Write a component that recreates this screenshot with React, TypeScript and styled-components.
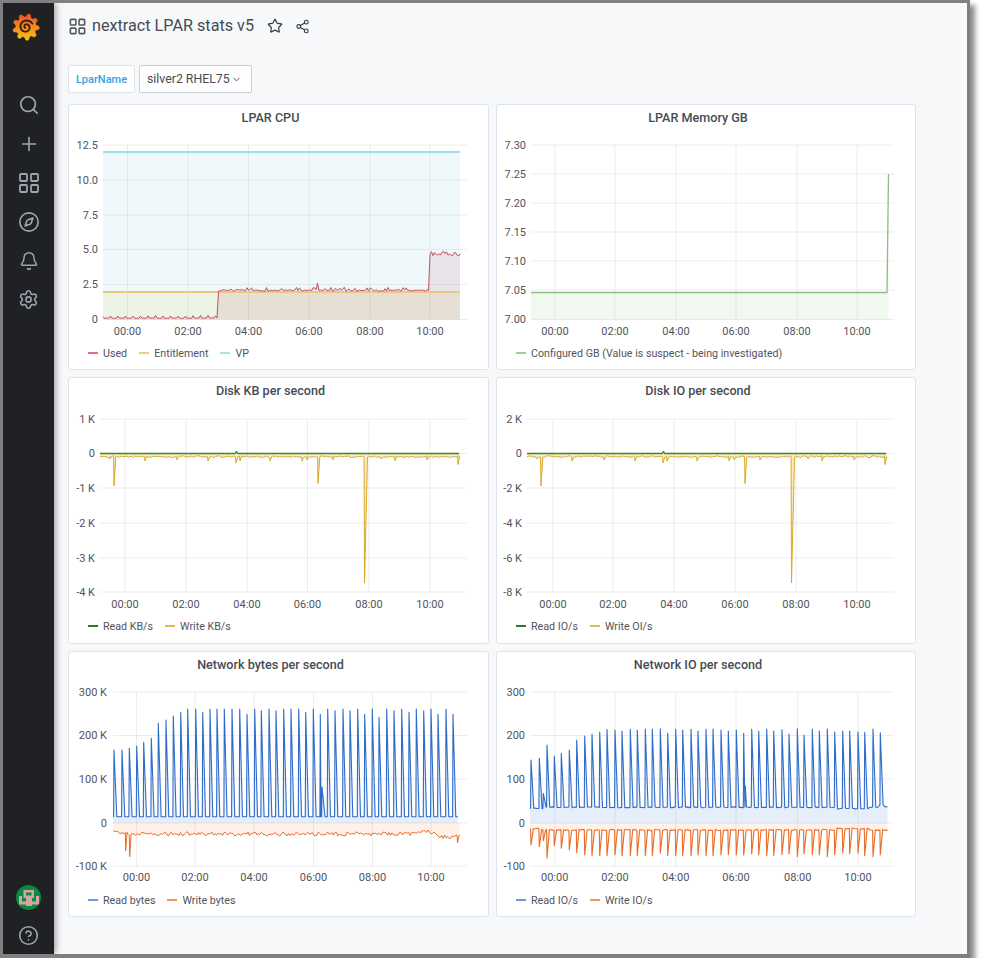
import React from 'react';
import styled, { createGlobalStyle } from 'styled-components';
import { Search, Plus, LayoutGrid, Compass, Bell, Settings, CircleHelp, Star, Share2, ChevronDown } from 'lucide-react';

const Global = createGlobalStyle`
  html, body { margin: 0; padding: 0; background: #fff; }
  body { font-family: Roboto, "Liberation Sans", sans-serif; color: #464c54; }
`;

const Frame = styled.div`
  box-sizing: border-box;
  width: 970px;
  height: 958px;
  border: solid #808080;
  border-width: 3px 3px 4px 3px;
  box-shadow: 5px 5px 5px rgba(0, 0, 0, 0.45);
  display: flex;
  background: #f7f8fa;
  overflow: hidden;
`;
const Sidebar = styled.nav`
  width: 51px;
  flex: none;
  background: #1f2125;
  box-shadow: 2px 0 6px rgba(0, 0, 0, 0.35);
  display: flex;
  flex-direction: column;
  align-items: center;
  z-index: 1;
`;
const LogoSlot = styled.div`
  box-sizing: border-box;
  height: 48px;
  width: 100%;
  padding-right: 6px;
  display: flex;
  align-items: center;
  justify-content: center;
  margin-bottom: 34px;
`;
const NavItem = styled.div<{ $h?: number }>`
  height: ${p => p.$h ?? 39}px;
  width: 100%;
  flex: none;
  display: flex;
  align-items: center;
  justify-content: center;
  color: #9da5b0;
`;
const Spacer = styled.div`
  flex: 1;
`;
const Main = styled.main`
  flex: 1;
  padding-left: 14px;
`;
const Header = styled.header`
  height: 46px;
  display: flex;
  align-items: center;
  color: #464c54;
`;
const Title = styled.h1`
  margin: 0 13px 0 5px;
  font-size: 16.2px;
  font-weight: 400;
  line-height: 1;
  color: #464c54;
  white-space: nowrap;
`;
const HeaderBtn = styled.span`
  display: inline-flex;
  margin-right: 12px;
  color: #363b42;
`;
const Vars = styled.div`
  margin-top: 16px;
  margin-bottom: 11px;
  display: flex;
  gap: 4px;
  height: 28px;
`;
const VarLabel = styled.div`
  box-sizing: border-box;
  width: 67px;
  background: #fff;
  border: 1px solid #dde4ed;
  border-radius: 2px;
  color: #33a2e5;
  font-size: 11px;
  font-weight: 500;
  display: flex;
  align-items: center;
  justify-content: center;
`;
const VarSelect = styled.div`
  box-sizing: border-box;
  width: 113px;
  background: #fff;
  border: 1px solid #c7d0d9;
  border-radius: 2px;
  color: #464c54;
  font-size: 12.3px;
  white-space: nowrap;
  display: flex;
  align-items: center;
  padding-left: 7px;
  gap: 1px;
`;
const Grid = styled.div`
  display: grid;
  grid-template-columns: 421px 420px;
  grid-template-rows: 266px 267px 266px;
  gap: 7px;
`;
const Panel = styled.section`
  box-sizing: border-box;
  background: #fff;
  border: 1px solid #dde4ed;
  border-radius: 3px;
  display: flex;
  flex-direction: column;
`;
const PanelTitle = styled.h2`
  margin: 0;
  height: 25px;
  padding-right: 16px;
  font-size: 12.6px;
  font-weight: 500;
  line-height: 25px;
  text-align: center;
  color: #464c54;
  flex: none;
`;
const ChartSvg = styled.svg`
  display: block;
  flex: none;
  width: 419px;
  height: 213px;
`;
const Legend = styled.div`
  height: 20px;
  padding-left: 19px;
  display: flex;
  align-items: center;
  gap: 12px;
  font-size: 10.7px;
  color: #52545c;
`;
const LegendItem = styled.div`
  display: flex;
  align-items: center;
  gap: 5px;
`;
const Swatch = styled.i<{ $c: string }>`
  display: block;
  width: 10px;
  height: 2px;
  background: ${p => p.$c};
`;
const GridLine = styled.line`
  stroke: rgba(0, 0, 0, 0.07);
  stroke-width: 1;
`;
const AxisText = styled.text`
  font-family: Roboto, "Liberation Sans", sans-serif;
  font-size: 11px;
  fill: #52545c;
`;

type Pt = [number, number];
type Spike = [number, number, number?];
function rng(seed: number) {
  let a = seed;
  return () => {
    a |= 0; a = (a + 0x6d2b79f5) | 0;
    let t = Math.imul(a ^ (a >>> 15), 1 | a);
    t = (t + Math.imul(t ^ (t >>> 7), 61 | t)) ^ t;
    return ((t ^ (t >>> 14)) >>> 0) / 4294967296;
  };
}
function spiked(x0: number, x1: number, base: (x: number) => number, spikes: Spike[], defW = 2.8, step = 2.5): Pt[] {
  const pts: Pt[] = [];
  for (let x = x0; x <= x1; x += step) {
    const blocked = spikes.some(([sx, , w]) => x > sx - 0.8 && x < sx + (w ?? defW) + 0.4);
    if (!blocked) pts.push([x, base(x)]);
  }
  spikes.forEach(([sx, sy, w]) => {
    pts.push([sx - 0.4, base(sx)]);
    pts.push([sx, sy]);
    pts.push([sx + (w ?? defW), base(sx + (w ?? defW))]);
  });
  return pts.sort((a, b) => a[0] - b[0]);
}
const toPath = (p: Pt[]) => 'M' + p.map(([x, y]) => `${x.toFixed(1)},${y.toFixed(1)}`).join('L');
const toArea = (p: Pt[], y0: number) => `${toPath(p)}L${p[p.length - 1][0]},${y0}L${p[0][0]},${y0}Z`;

type Series = { pts: Pt[]; color: string; fill?: string; zero?: number; width?: number };

interface ChartProps {
  left: number; top: number;
  gridL: number; gridR: number; labelR: number;
  xOffset?: number;
  yTicks: [string, number][];
  xTicks: [string, number][];
  series: Series[];
}
function Chart({ left, top, gridL, gridR, labelR, xOffset = 15, yTicks, xTicks, series }: ChartProps) {
  const yTop = yTicks[0][1];
  const yBot = yTicks[yTicks.length - 1][1];
  return (
    <ChartSvg viewBox={`${left} ${top} 419 213`}>
      {yTicks.map(([l, y]) => <GridLine key={l} x1={gridL} x2={gridR} y1={y} y2={y} />)}
      {xTicks.map(([l, x]) => <GridLine key={l} x1={x} x2={x} y1={yTop} y2={yBot} />)}
      {series.map((s, i) => s.fill ? <path key={'a' + i} d={toArea(s.pts, s.zero!)} fill={s.fill} /> : null)}
      {series.map((s, i) => <path key={'l' + i} d={toPath(s.pts)} fill="none" stroke={s.color} strokeWidth={s.width ?? 1} strokeLinejoin="round" />)}
      {yTicks.map(([l, y]) => <AxisText key={l} x={labelR} y={y + 3.5} textAnchor="end">{l}</AxisText>)}
      {xTicks.map(([l, x]) => <AxisText key={l} x={x} y={yBot + xOffset} textAnchor="middle">{l}</AxisText>)}
    </ChartSvg>
  );
}

const times = ['00:00', '02:00', '04:00', '06:00', '08:00', '10:00'];
const xt = (xs: number[]) => xs.map((x, i) => [times[i], x] as [string, number]);

// LPAR CPU
const cpuY = (v: number) => 319.5 - v * 13.96;
const cpuUsed = (() => {
  const r = rng(7);
  const pts: Pt[] = [];
  for (let x = 103; x <= 460; x += 1.5) {
    let v: number;
    if (x < 217.5) v = 0.08 + (Math.round((x - 103) / 1.5) % 5 === 0 ? 0.14 + r() * 0.08 : r() * 0.03);
    else if (x < 429.5) v = 2.02 + r() * 0.12 + (r() > 0.82 ? 0.16 : 0);
    else v = 4.55 + r() * 0.32;
    if (Math.abs(x - 318) < 0.8) v = 2.6;
    pts.push([x, cpuY(v)]);
  }
  return pts;
})();
const flat = (x0: number, x1: number, y: number): Pt[] => [[x0, y], [x1, y]];

// Disk
const diskBaseSpikes: Spike[] = [
  [114, 486, 1.8], [318, 483.5, 1.8], [364.5, 583, 3],
  [110, 459], [145, 461], [177, 460], [208, 461], [236, 463], [240, 461], [270, 461], [302, 461], [307, 460], [333, 460], [381, 459], [395, 461], [427, 460], [458, 464.5],
];
const diskWrite = (dx: number, seed: number): Pt[] => {
  const r = rng(seed);
  return spiked(100 + dx, 460 + dx, () => 456.7 + (r() - 0.5) * 1.8, diskBaseSpikes.map(([x, y, w]) => [x + dx, y, w] as Spike), 1.8, 1.5);
};
const diskRead = (x0: number, x1: number, bump: number): Pt[] => [[x0, 453.5], [bump - 1.2, 453.5], [bump, 451.5], [bump + 1.2, 453.5], [x1, 453.5]];

// Network bytes
const nbX = [162,186,208,230,251,274,295,318,340,362,383,407,428,450,471,493,516,539,561,584,604,627,648,671,693,716,737,760,781,803,825,849,870,893,914,937,957,980,1002,1025,1047,1069,1091,1113,1134,1158,1179];
const nbZ = [210,210,205,198,187,175,130,120,108,97,87,87,97,87,87,87,87,87,103,87,92,87,92,87,87,87,97,87,103,87,92,87,92,87,103,87,112,87,92,87,97,87,92,87,103,87,103];
const nbRead = spiked(113, 460, () => 816.7, [
  ...nbX.map((z, i) => [60 + z / 3, 680 + nbZ[i] / 3, 2.8] as Spike).filter(s => Math.abs(s[0] - 320.3) > 0.5),
  [320.3, 714.3, 0.7], [322, 786.7, 3],
]);
const nbWrite = (() => {
  const r = rng(11);
  return spiked(113, 460, x => {
    let b = 834;
    if (x < 120) b = 831;
    else if (x > 410 && x < 437) b = 832;
    else if (x >= 437) b = 836.5;
    return b + (r() - 0.5) * 4;
  }, [[125.7, 850.7, 1.4], [129.7, 856.7, 1.4], [457.5, 843, 1.5]], 1.4, 1.5);
})();

// Network IO
const niX = [123,148,160,171,193,214,238,260,284,306,329,351,375,396,421,442,466,487,511,533,557,578,603,624,648,669,693,715,739,761,785,806,830,851,876,897,922,942,967,988,1012,1034,1058,1079,1104,1124,1149,1171];
const niT = [240,235,340,195,228,220,210,180,168,162,156,148,150,153,148,150,147,147,146,160,148,150,148,153,148,147,150,153,150,160,148,153,147,153,149,162,146,165,148,153,147,156,153,153,155,157,147,158];
const niB = [495,500,482,535,497,505,510,518,525,527,527,527,525,527,527,527,527,527,520,527,527,527,527,525,527,527,525,525,525,525,522,525,527,527,524,522,530,522,525,525,530,525,520,522,520,527,530,525];
const niRead = (() => {
  const r = rng(3);
  return spiked(530, 887.5, x => {
    let b = 807.3;
    if (x < 545) b = 808.5;
    else if (x > 837 && x < 868) b = 808.5;
    else if (x > 880) b = 805 + (x > 884 ? 1.5 : 0);
    return b + (r() - 0.5) * 0.9;
  }, [
    ...niX.map((z, i) => [490 + z / 3, 680 + niT[i] / 3, 2.8] as Spike),
    [745.3, 785.7, 3],
  ]);
})();
const niWrite = (() => {
  const r = rng(5);
  return spiked(530, 887.5, x => {
    let b = 830;
    if (x < 540) b = 828.5;
    else if (x > 837 && x < 868) b = 828.5;
    return b + (r() - 0.5) * 1.2;
  }, niX.map((z, i) => [490 + z / 3, 680 + niB[i] / 3, 2.4] as Spike));
})();

const BLUE = '#2f6cc9', ORANGE = '#ea6d28', YEL = '#dca824', DGREEN = '#37872d';
const BLUEF = 'rgba(31,96,196,0.11)', ORANGEF = 'rgba(250,100,0,0.09)';

const netY: [string, number][] = [['300 K', 692], ['200 K', 735.5], ['100 K', 779], ['0', 823], ['-100 K', 866]];
const netYB: [string, number][] = [['300', 692], ['200', 735.5], ['100', 779], ['0', 823], ['-100', 866]];

function GrafanaLogo() {
  const cx = 20, cy = 21, pts: string[] = [];
  const n = 9;
  for (let i = 0; i < n * 4; i++) {
    const a = (i / (n * 4)) * Math.PI * 2 - Math.PI / 2 + 0.16;
    const ph = i % 4;
    const rad = ph === 0 || ph === 1 ? 14.6 : 11.2;
    pts.push(`${(cx + rad * Math.cos(a)).toFixed(2)},${(cy + rad * Math.sin(a)).toFixed(2)}`);
  }
  const spiral: string[] = [];
  for (let t = 0; t <= 1; t += 0.02) {
    const a = -0.5 - t * Math.PI * 3.2;
    const rad = 8 - t * 7;
    spiral.push(`${(cx + rad * Math.cos(a)).toFixed(2)},${(cy + rad * Math.sin(a)).toFixed(2)}`);
  }
  return (
    <svg width="36" height="38" viewBox="0 0 40 42">
      <defs>
        <linearGradient id="gf" x1="0" y1="0" x2="0" y2="1">
          <stop offset="0" stopColor="#ee4f27" />
          <stop offset="1" stopColor="#fcc40f" />
        </linearGradient>
      </defs>
      <polygon points={pts.join(' ')} fill="url(#gf)" stroke="url(#gf)" strokeWidth="0.8" strokeLinejoin="round" />
      <polyline points={spiral.join(' ')} fill="none" stroke="#2a1d1a" strokeWidth="2" strokeLinecap="round" />
    </svg>
  );
}

function Avatar() {
  return (
    <svg width="25" height="25" viewBox="0 0 25 25">
      <circle cx="12.5" cy="12.5" r="12.5" fill="#0b8a43" />
      <g fill="#d7a3a3">
        <path fillRule="evenodd" d="M7.5 5h10.5v8H7.5z M10 7.5v3h5.5v-3z" />
        <rect x="3" y="11" width="3" height="8" />
        <rect x="20" y="11" width="3" height="8" />
        <rect x="3" y="16.5" width="20" height="3" />
        <rect x="10" y="13" width="6" height="8" />
      </g>
    </svg>
  );
}

export default function App() {
  return (
    <Frame>
      <Global />
      <Sidebar>
        <LogoSlot><GrafanaLogo /></LogoSlot>
        <NavItem><Search size={22} strokeWidth={1.9} /></NavItem>
        <NavItem><Plus size={22} strokeWidth={1.8} /></NavItem>
        <NavItem><LayoutGrid size={24} strokeWidth={1.8} /></NavItem>
        <NavItem><Compass size={22} strokeWidth={1.8} /></NavItem>
        <NavItem><Bell size={20} strokeWidth={1.8} /></NavItem>
        <NavItem><Settings size={21} strokeWidth={1.8} /></NavItem>
        <Spacer />
        <NavItem><Avatar /></NavItem>
        <NavItem $h={37}><CircleHelp size={21} strokeWidth={1.8} /></NavItem>
      </Sidebar>
      <Main>
        <Header>
          <LayoutGrid size={19} strokeWidth={2} color="#52575f" />
          <Title>nextract LPAR stats v5</Title>
          <HeaderBtn><Star size={16} strokeWidth={1.8} /></HeaderBtn>
          <HeaderBtn><Share2 size={15} strokeWidth={1.8} /></HeaderBtn>
        </Header>
        <Vars>
          <VarLabel>LparName</VarLabel>
          <VarSelect>silver2 RHEL75<ChevronDown size={11} strokeWidth={2} /></VarSelect>
        </Vars>
        <Grid>
          <Panel>
            <PanelTitle>LPAR CPU</PanelTitle>
            <Chart left={69} top={130} gridL={103} gridR={467} labelR={98}
              yTicks={[['12.5', 145], ['10.0', 180], ['7.5', 215], ['5.0', 249.5], ['2.5', 284.5], ['0', 319.5]]}
              xTicks={xt([127.5, 188, 248.5, 309, 370, 430])}
              series={[
                { pts: flat(103, 460, 152), color: '#9fdfe9', fill: 'rgba(132,205,232,0.13)', zero: 319.5, width: 2 },
                { pts: flat(103, 460, 292), color: '#e8ca7c', fill: 'rgba(229,198,52,0.1)', zero: 319.5, width: 2 },
                { pts: cpuUsed, color: '#c8505f', fill: 'rgba(178,53,72,0.1)', zero: 319.5, width: 1 },
              ]} />
            <Legend>
              <LegendItem><Swatch $c="#de7180" />Used</LegendItem>
              <LegendItem><Swatch $c="#edcd7d" />Entitlement</LegendItem>
              <LegendItem><Swatch $c="#a8e2ec" />VP</LegendItem>
            </Legend>
          </Panel>
          <Panel>
            <PanelTitle>LPAR Memory GB</PanelTitle>
            <Chart left={497} top={130} gridL={531} gridR={894} labelR={526}
              yTicks={[['7.30', 145], ['7.25', 174], ['7.20', 203], ['7.15', 232], ['7.10', 261], ['7.05', 290], ['7.00', 319.5]]}
              xTicks={xt([555, 615, 676, 736, 797, 857])}
              series={[
                { pts: [[531, 292.5], [887, 292.5], [888.5, 174]], color: '#8cbf7f', fill: 'rgba(115,191,105,0.1)', zero: 319.5, width: 1.3 },
              ]} />
            <Legend>
              <LegendItem><Swatch $c="#9fcf94" />Configured GB (Value is suspect - being investigated)</LegendItem>
            </Legend>
          </Panel>
          <Panel>
            <PanelTitle>Disk KB per second</PanelTitle>
            <Chart left={69} top={403} gridL={100} gridR={467} labelR={95} xOffset={16}
              yTicks={[['1 K', 419], ['0', 453.5], ['-1 K', 488], ['-2 K', 523], ['-3 K', 558], ['-4 K', 592]]}
              xTicks={xt([125, 186, 247, 307.5, 369, 430])}
              series={[
                { pts: diskWrite(0, 21), color: YEL, fill: 'rgba(224,169,19,0.22)', zero: 453.5, width: 1 },
                { pts: diskRead(100, 459, 236.5), color: DGREEN, width: 1.4 },
              ]} />
            <Legend>
              <LegendItem><Swatch $c="#2f7a2a" />Read KB/s</LegendItem>
              <LegendItem><Swatch $c="#e8b64c" />Write KB/s</LegendItem>
            </Legend>
          </Panel>
          <Panel>
            <PanelTitle>Disk IO per second</PanelTitle>
            <Chart left={497} top={403} gridL={527} gridR={894} labelR={522} xOffset={16}
              yTicks={[['2 K', 419], ['0', 453.5], ['-2 K', 488], ['-4 K', 523], ['-6 K', 558], ['-8 K', 592]]}
              xTicks={xt([553, 613, 674, 735, 796, 857])}
              series={[
                { pts: diskWrite(427, 22), color: YEL, fill: 'rgba(224,169,19,0.22)', zero: 453.5, width: 1 },
                { pts: diskRead(527, 886, 663.5), color: DGREEN, width: 1.4 },
              ]} />
            <Legend>
              <LegendItem><Swatch $c="#2f7a2a" />Read IO/s</LegendItem>
              <LegendItem><Swatch $c="#e8b64c" />Write OI/s</LegendItem>
            </Legend>
          </Panel>
          <Panel>
            <PanelTitle>Network bytes per second</PanelTitle>
            <Chart left={69} top={677} gridL={113} gridR={467} labelR={107}
              yTicks={netY}
              xTicks={xt([136.5, 195, 254, 313.5, 372.5, 431])}
              series={[
                { pts: nbRead, color: BLUE, fill: BLUEF, zero: 823, width: 1.1 },
                { pts: nbWrite, color: ORANGE, fill: ORANGEF, zero: 823, width: 1 },
              ]} />
            <Legend>
              <LegendItem><Swatch $c="#6f97d8" />Read bytes</LegendItem>
              <LegendItem><Swatch $c="#f4975f" />Write bytes</LegendItem>
            </Legend>
          </Panel>
          <Panel>
            <PanelTitle>Network IO per second</PanelTitle>
            <Chart left={497} top={677} gridL={530} gridR={894} labelR={525}
              yTicks={netYB}
              xTicks={xt([554.7, 615, 675.7, 736, 797.7, 858])}
              series={[
                { pts: niRead, color: BLUE, fill: BLUEF, zero: 823, width: 1.1 },
                { pts: niWrite, color: ORANGE, fill: ORANGEF, zero: 823, width: 1.1 },
              ]} />
            <Legend>
              <LegendItem><Swatch $c="#6f97d8" />Read IO/s</LegendItem>
              <LegendItem><Swatch $c="#f4975f" />Write IO/s</LegendItem>
            </Legend>
          </Panel>
        </Grid>
      </Main>
    </Frame>
  );
}
